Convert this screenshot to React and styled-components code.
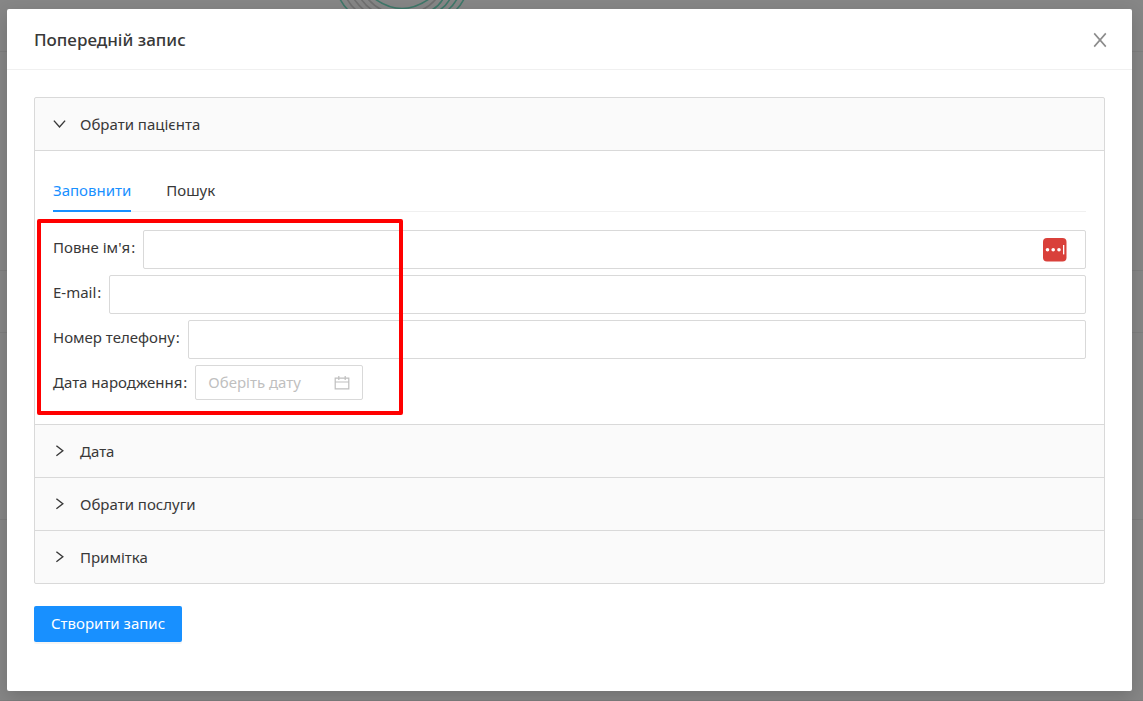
import React, { useState } from 'react';
import styled, { createGlobalStyle } from 'styled-components';

const GlobalStyle = createGlobalStyle`
  * {
    box-sizing: border-box;
  }

  body {
    margin: 0;
    background: #868686;
    color: #383838;
    font-family: "Noto Sans", "Open Sans", sans-serif;
    font-size: 15px;
    line-height: 24px;
  }

  button, input {
    font: inherit;
    color: inherit;
  }
`;

const Page = styled.div`
  position: relative;
  min-height: 100vh;
  padding: 9px 11px 10px 7px;
  overflow: hidden;
`;

const Backdrop = styled.div`
  position: absolute;
  inset: 0;
  display: flex;
  flex-direction: column;
`;

const Band = styled.div`
  flex: ${props => props.$grow};
  border-bottom: 1px solid #7e7e7e;
`;

const Emblem = styled.svg`
  position: absolute;
  top: 0;
  left: 332px;
`;

const Modal = styled.section`
  position: relative;
  min-height: calc(100vh - 19px);
  background: #fff;
  border-radius: 2px;
  box-shadow: 0 6px 18px rgba(0, 0, 0, .16);
`;

const Header = styled.header`
  display: flex;
  align-items: center;
  justify-content: space-between;
  height: 61px;
  padding: 2px 24px 0 27px;
  border-bottom: 1px solid #f0f0f0;
`;

const Title = styled.h1`
  margin: 0;
  font-size: 17px;
  font-weight: 500;
`;

const IconButton = styled.button`
  display: flex;
  padding: 0;
  border: none;
  background: none;
  color: #8c8c8c;
  cursor: pointer;
`;

const Body = styled.div`
  padding: 27px;
`;

const Collapse = styled.div`
  border: 1px solid #d9d9d9;
  border-radius: 2px;
  background: #fafafa;
`;

const Panel = styled.div`
  & + & {
    border-top: 1px solid #d9d9d9;
  }
`;

const PanelHeader = styled.button`
  display: flex;
  align-items: center;
  gap: 13px;
  width: 100%;
  height: 52px;
  padding: 0 18px;
  border: none;
  background: none;
  text-align: left;
  cursor: pointer;
`;

const PanelContent = styled.div`
  padding: 18px 18px 24px;
  border-top: 1px solid #d9d9d9;
  background: #fff;
`;

const Tabs = styled.div`
  display: flex;
  gap: 35px;
  margin-bottom: 18px;
  border-bottom: 1px solid #f0f0f0;
`;

const Tab = styled.button`
  height: 43px;
  margin-bottom: -1px;
  padding: 0;
  border: none;
  border-bottom: 2px solid ${props => props.$active ? '#1890ff' : 'transparent'};
  background: none;
  color: ${props => props.$active ? '#1890ff' : '#383838'};
  cursor: pointer;
`;

const Form = styled.form`
  position: relative;
  display: flex;
  flex-direction: column;
  gap: 6px;
`;

const Highlight = styled.div`
  position: absolute;
  top: -11px;
  left: -16px;
  width: 366px;
  height: 196px;
  border: 4px solid #f00;
  border-radius: 2px;
  pointer-events: none;
`;

const Row = styled.div`
  display: flex;
  align-items: flex-start;
`;

const Label = styled.label`
  margin-right: 8px;
  line-height: 35px;
  white-space: nowrap;
`;

const Colon = styled.span`
  margin-left: 1px;
`;

const Field = styled.div`
  display: flex;
  flex: 1;
  align-items: center;
  max-width: ${props => props.$compact ? '168px' : 'none'};
  height: ${props => props.$compact ? '35px' : '39px'};
  padding: ${props => props.$compact ? '0 12px' : '0 18px 0 12px'};
  border: 1px solid #d9d9d9;
  border-radius: 2px;
  color: #bfbfbf;
`;

const Input = styled.input`
  flex: 1;
  min-width: 0;
  padding: 0 0 2px;
  border: none;
  outline: none;
  background: none;
  color: #383838;

  &::placeholder {
    color: #bfbfbf;
    opacity: 1;
  }
`;

const Submit = styled.button`
  height: 36px;
  margin-top: 22px;
  padding: 0 17px 2px;
  border: none;
  border-radius: 2px;
  background: #1890ff;
  box-shadow: 0 2px 0 rgba(0, 0, 0, .04);
  color: #fff;
  cursor: pointer;
`;

const CloseIcon = () => (
  <svg width="16" height="16" viewBox="0 0 16 16" fill="none" stroke="currentColor" strokeWidth="1.6">
    <path d="M2.2 1.4 13.8 14.6M13.8 1.4 2.2 14.6" />
  </svg>
);

const Arrow = ({ open }) => (
  <svg width="14" height="14" viewBox="0 0 14 14" fill="none" stroke="currentColor" strokeWidth="1.4">
    <path d={open ? 'M.9 3.6 6.5 10 12.1 3.6' : 'M3.4 1.8 9.8 6.8 3.4 11.8'} />
  </svg>
);

const CalendarIcon = () => (
  <svg width="16" height="16" viewBox="0 0 16 16" fill="none" stroke="currentColor" strokeWidth="1.2">
    <path d="M1.2 3.2h13.6v10.6H1.2zM1.2 7h13.6M4.8 1v4M11.2 1v4" />
  </svg>
);

const PasswordIcon = () => (
  <svg width="24" height="24" viewBox="0 0 24 24">
    <rect width="23.5" height="23.5" rx="4" fill="#d9403a" />
    <g fill="#fff">
      <circle cx="4.5" cy="11.8" r="1.8" />
      <circle cx="10.2" cy="11.8" r="1.8" />
      <circle cx="16" cy="11.8" r="1.8" />
      <rect x="20" y="7" width="1.3" height="9.4" />
    </g>
  </svg>
);

const panels = ['Дата', 'Обрати послуги', 'Примітка'];

export default function App() {
  const [tab, setTab] = useState('fill');

  return (
    <Page>
      <GlobalStyle />
      <Backdrop>
        <Band $grow="51" />
        <Band $grow="220" />
        <Band $grow="61" />
        <Band $grow="188" />
        <Band $grow="181" />
      </Backdrop>
      <Emblem width="140" height="12" viewBox="0 0 140 12" fill="none">
        <g stroke="#6f6f6f" strokeWidth="1.6">
          <path d="M15 -1Q19 6 24 10M22 -1Q27 6 32 10M29 -1Q34 6 40 10M36 -1Q42 6 50 10M104 -1Q98 6 90 10" />
        </g>
        <g stroke="#3f7769" strokeWidth="1.6">
          <path d="M8 -1Q11 5 16 10M43 -1Q70 18 97 -1M132 -1Q129 5 124 10M125 -1Q121 6 116 10M118 -1Q114 6 108 10M111 -1Q107 6 100 10" />
        </g>
      </Emblem>
      <Modal role="dialog" aria-labelledby="title">
        <Header>
          <Title id="title">Попередній запис</Title>
          <IconButton type="button" aria-label="Закрити"><CloseIcon /></IconButton>
        </Header>
        <Body>
          <Collapse>
            <Panel>
              <PanelHeader type="button" aria-expanded="true">
                <Arrow open />
                Обрати пацієнта
              </PanelHeader>
              <PanelContent>
                <Tabs role="tablist">
                  <Tab type="button" role="tab" $active={tab === 'fill'} onClick={() => setTab('fill')}>Заповнити</Tab>
                  <Tab type="button" role="tab" $active={tab === 'search'} onClick={() => setTab('search')}>Пошук</Tab>
                </Tabs>
                <Form id="patient">
                  <Row>
                    <Label htmlFor="name">Повне ім'я<Colon>:</Colon></Label>
                    <Field>
                      <Input id="name" type="text" />
                      <PasswordIcon />
                    </Field>
                  </Row>
                  <Row>
                    <Label htmlFor="email">E-mail<Colon>:</Colon></Label>
                    <Field><Input id="email" type="email" /></Field>
                  </Row>
                  <Row>
                    <Label htmlFor="phone">Номер телефону<Colon>:</Colon></Label>
                    <Field><Input id="phone" type="tel" /></Field>
                  </Row>
                  <Row>
                    <Label htmlFor="birthday">Дата народження<Colon>:</Colon></Label>
                    <Field $compact>
                      <Input id="birthday" type="text" placeholder="Оберіть дату" />
                      <CalendarIcon />
                    </Field>
                  </Row>
                  <Highlight />
                </Form>
              </PanelContent>
            </Panel>
            {panels.map(name => (
              <Panel key={name}>
                <PanelHeader type="button" aria-expanded="false">
                  <Arrow />
                  {name}
                </PanelHeader>
              </Panel>
            ))}
          </Collapse>
          <Submit type="submit" form="patient">Створити запис</Submit>
        </Body>
      </Modal>
    </Page>
  );
}
